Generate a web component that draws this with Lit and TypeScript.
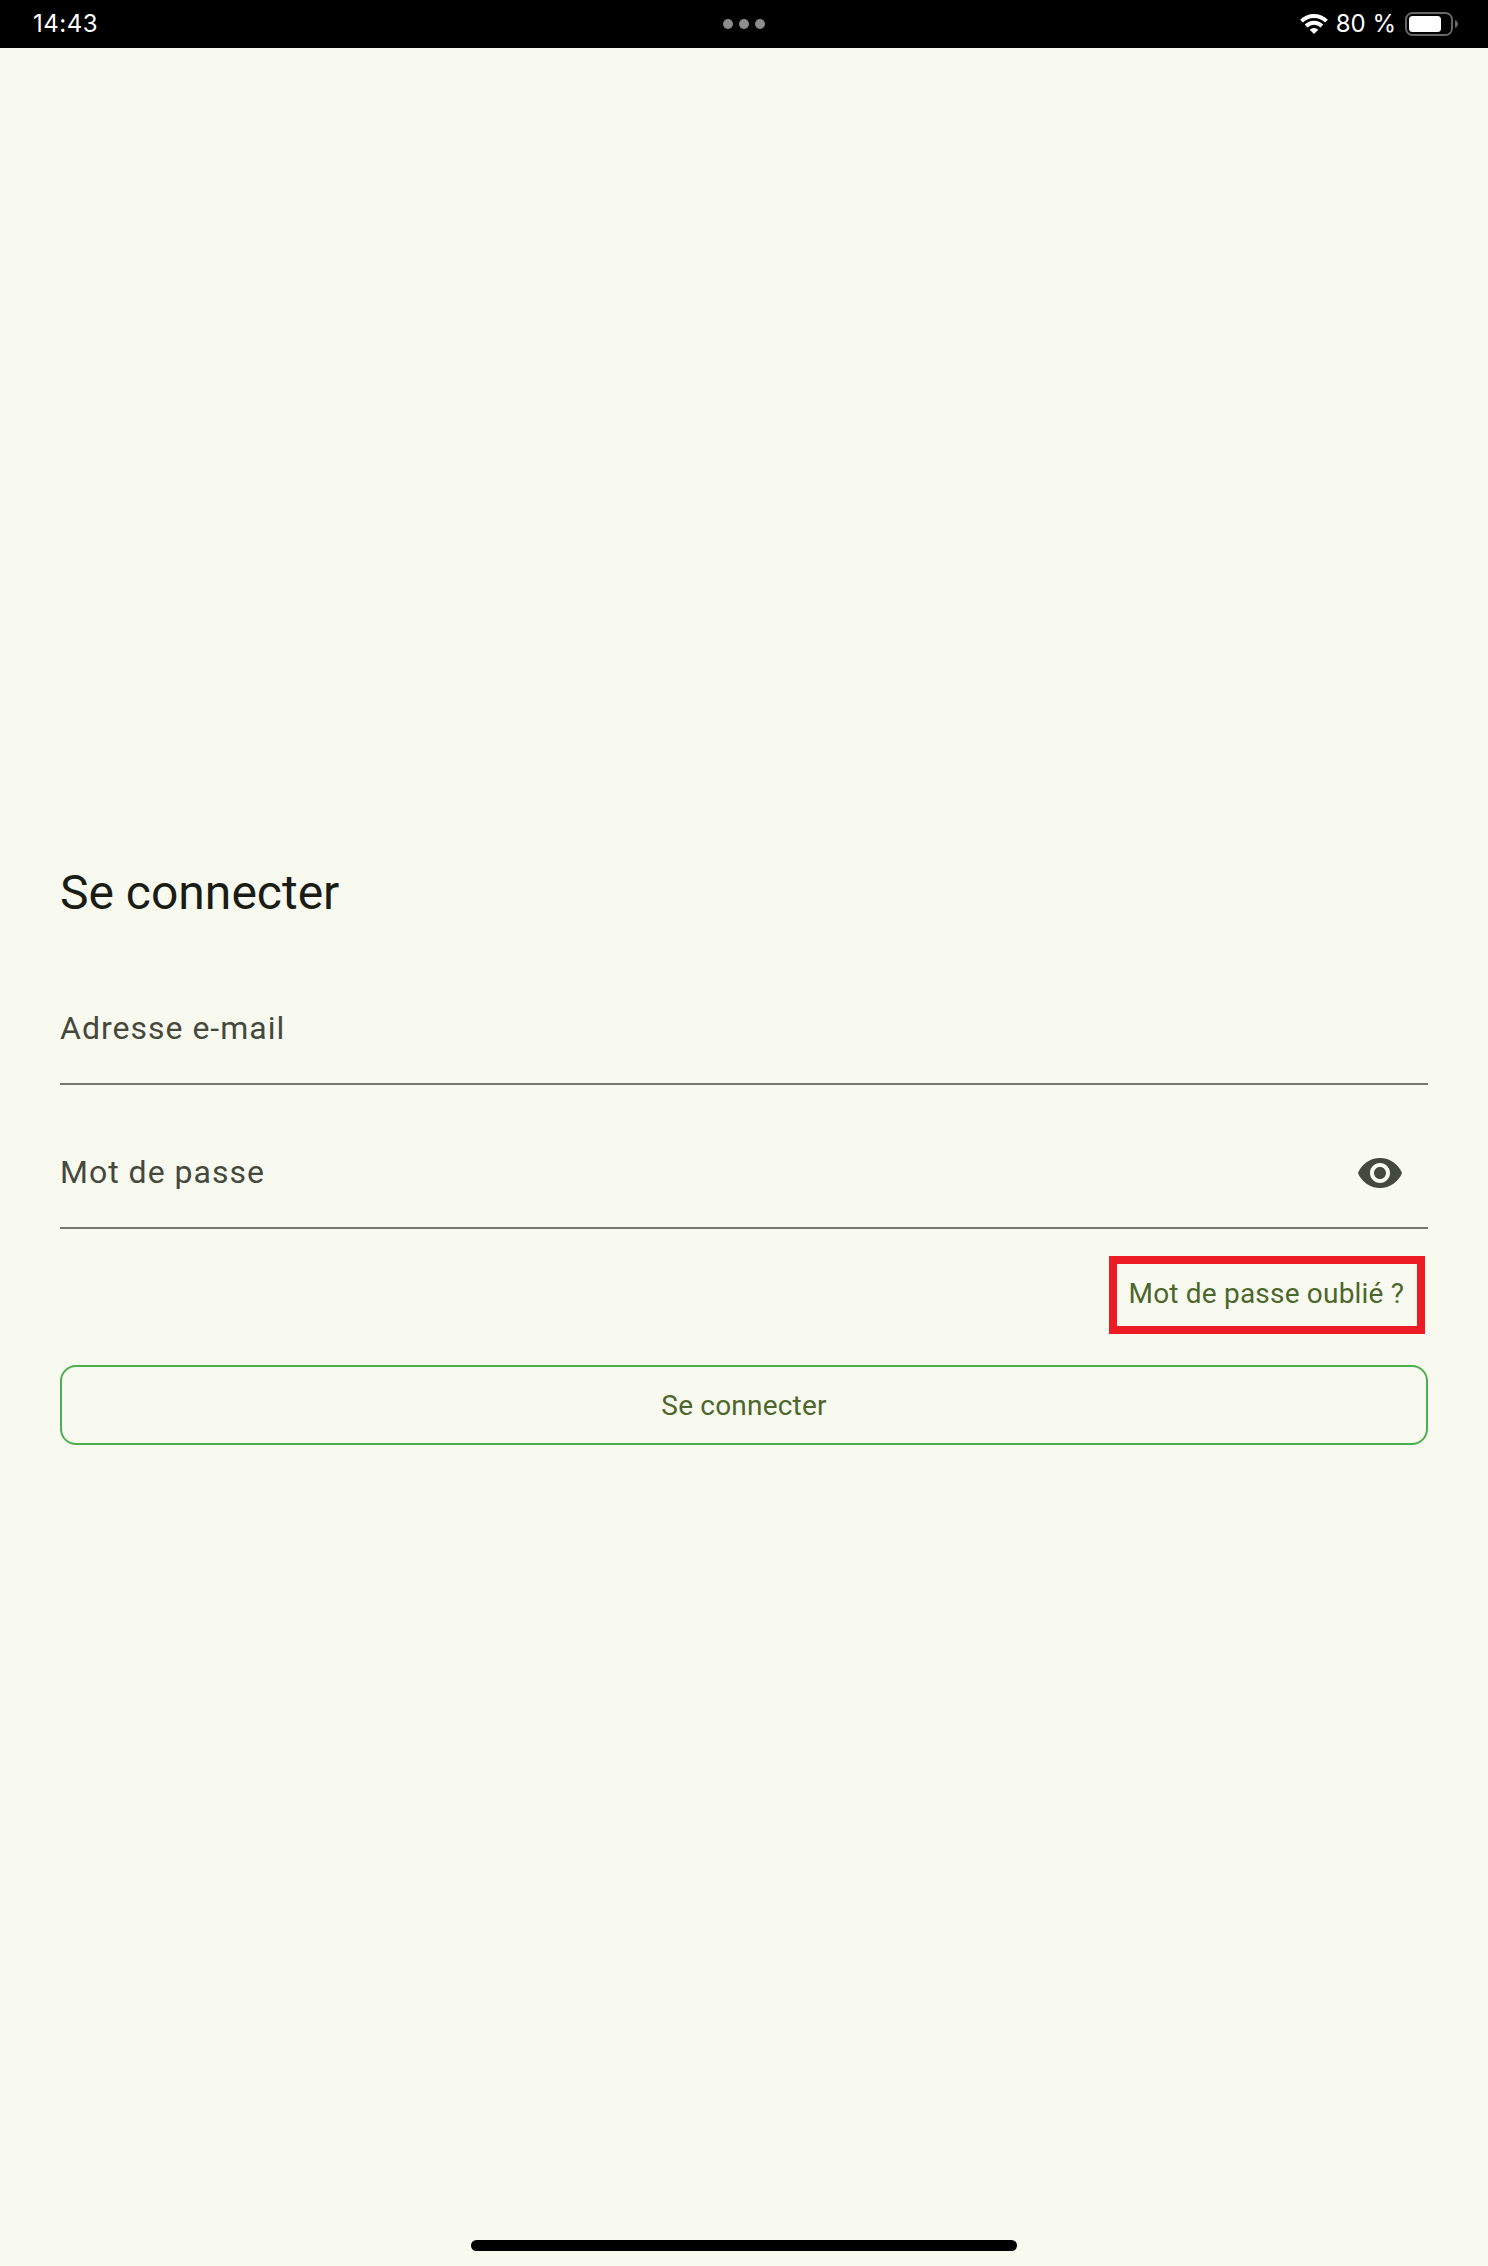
import { LitElement, html, css } from "lit";
import { customElement, property } from "lit/decorators.js";

@customElement("status-bar")
class StatusBar extends LitElement {
  static styles = css`
    :host {
      display: grid;
      grid-template-columns: 1fr auto 1fr;
      align-items: center;
      height: 48px;
      box-sizing: border-box;
      padding: 0 29px;
      background: #000;
      color: #fff;
      font: 400 24px/48px Inter, sans-serif;
    }
    .time { padding-left: 4px; letter-spacing: 0.5px; }
    .dots { display: flex; gap: 6px; }
    .dot { width: 10px; height: 10px; border-radius: 50%; background: #8c8c8c; }
    .right { display: flex; align-items: center; justify-content: flex-end; }
    .wifi { width: 28px; height: 20px; margin-right: 8px; }
    .level { margin-right: 9px; white-space: nowrap; }
    .battery { width: 54px; height: 24px; }
  `;
  render() {
    return html`
      <span class="time">14:43</span>
      <div class="dots"><i class="dot"></i><i class="dot"></i><i class="dot"></i></div>
      <div class="right">
        <svg class="wifi" viewBox="0 0 28 20" fill="none" stroke="#fff" stroke-width="3.9">
          <path d="M1.5 7.2a17.8 17.8 0 0 1 25 0" />
          <path d="M6.1 12a11.2 11.2 0 0 1 15.8 0" />
          <path d="M14 20L9.7 15.7a6.2 6.2 0 0 1 8.6 0z" fill="#fff" stroke="none" />
        </svg>
        <span class="level">80 %</span>
        <svg class="battery" viewBox="0 0 54 24">
          <rect x="1" y="1" width="46" height="22" rx="6.5" fill="none" stroke="#666" stroke-width="2" />
          <rect x="4" y="4" width="32" height="16" rx="3.5" fill="#fff" />
          <path d="M50 8c4 1.4 4 6.6 0 8z" fill="#666" />
        </svg>
      </div>
    `;
  }
}

@customElement("text-field")
class TextField extends LitElement {
  @property() label = "";
  static styles = css`
    :host {
      display: flex;
      align-items: center;
      justify-content: space-between;
      box-sizing: border-box;
      height: 112px;
      padding-right: 24px;
      border-bottom: 2px solid #76796b;
      color: #44483d;
      font: 400 32px/48px Roboto, sans-serif;
      letter-spacing: 1px;
    }
  `;
  render() {
    return html`<span>${this.label}</span><slot></slot>`;
  }
}

@customElement("app-root")
class AppRoot extends LitElement {
  static styles = css`
    :host {
      display: flex;
      flex-direction: column;
      height: 2266px;
      background: #f9faef;
      font-family: Roboto, sans-serif;
    }
    .form {
      flex: 1;
      display: flex;
      flex-direction: column;
      padding: 813px 60px 0;
    }
    .title {
      margin: 0 0 48px;
      color: #1a1c16;
      font-size: 48px;
      font-weight: 400;
      line-height: 64px;
    }
    .password { margin-top: 32px; }
    .eye { display: block; width: 48px; height: 48px; margin-top: 2px; }
    .forgot {
      align-self: flex-end;
      box-sizing: border-box;
      width: 316px;
      height: 78px;
      margin: 27px 3px 31px 0;
      padding: 0 0 2px 11.5px;
      border: 8px solid #ed1c24;
      background: none;
      color: #4c662b;
      font: 400 28px/60px Roboto, sans-serif;
      letter-spacing: 0.2px;
      text-align: left;
      white-space: nowrap;
    }
    .submit {
      height: 80px;
      padding: 2px 0 0;
      border: 2px solid #4caf50;
      border-radius: 16px;
      background: none;
      color: #4c662b;
      font: 400 28px/40px Roboto, sans-serif;
      letter-spacing: 0.2px;
    }
    .home {
      align-self: center;
      width: 546px;
      height: 11px;
      margin-bottom: 15px;
      border-radius: 6px;
      background: #000;
    }
  `;
  render() {
    return html`
      <status-bar></status-bar>
      <main class="form">
        <h1 class="title">Se connecter</h1>
        <text-field label="Adresse e-mail"></text-field>
        <text-field class="password" label="Mot de passe">
          <svg class="eye" viewBox="0 0 24 24" fill="#44483d">
            <path d="M12 4.5C7 4.5 2.73 7.61 1 12c1.73 4.39 6 7.5 11 7.5s9.27-3.11 11-7.5c-1.73-4.39-6-7.5-11-7.5zM12 17c-2.76 0-5-2.24-5-5s2.24-5 5-5 5 2.24 5 5-2.24 5-5 5zm0-8c-1.66 0-3 1.34-3 3s1.34 3 3 3 3-1.34 3-3-1.34-3-3-3z" />
          </svg>
        </text-field>
        <button class="forgot">Mot de passe oublié ?</button>
        <button class="submit">Se connecter</button>
      </main>
      <div class="home"></div>
    `;
  }
}
